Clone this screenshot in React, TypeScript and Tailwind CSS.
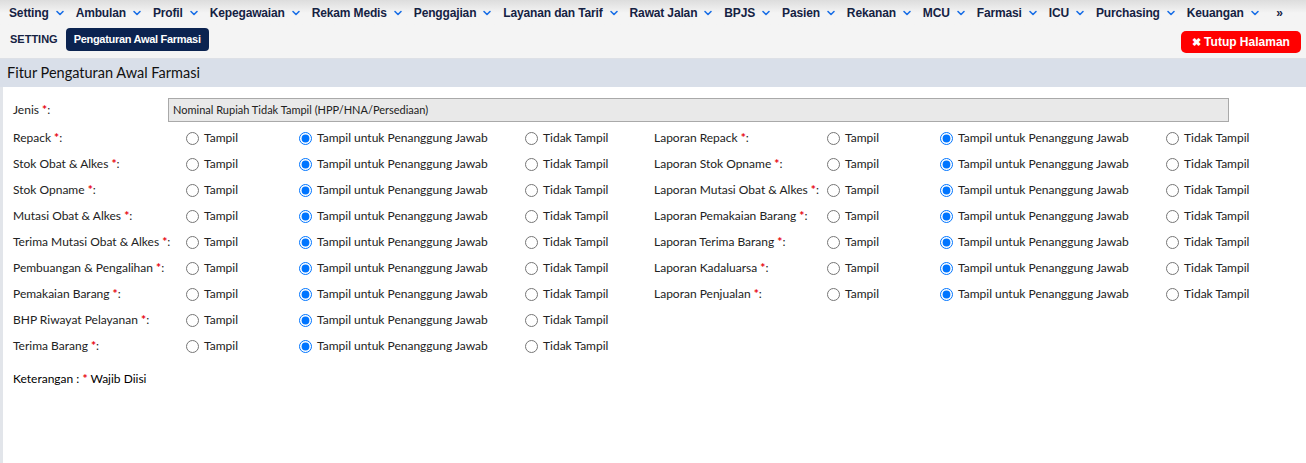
import { ChevronDown } from 'lucide-react';

const menus = [
  'Setting',
  'Ambulan',
  'Profil',
  'Kepegawaian',
  'Rekam Medis',
  'Penggajian',
  'Layanan dan Tarif',
  'Rawat Jalan',
  'BPJS',
  'Pasien',
  'Rekanan',
  'MCU',
  'Farmasi',
  'ICU',
  'Purchasing',
  'Keuangan',
];

const leftRows = [
  'Repack',
  'Stok Obat & Alkes',
  'Stok Opname',
  'Mutasi Obat & Alkes',
  'Terima Mutasi Obat & Alkes',
  'Pembuangan & Pengalihan',
  'Pemakaian Barang',
  'BHP Riwayat Pelayanan',
  'Terima Barang',
];

const rightRows = [
  'Laporan Repack',
  'Laporan Stok Opname',
  'Laporan Mutasi Obat & Alkes',
  'Laporan Pemakaian Barang',
  'Laporan Terima Barang',
  'Laporan Kadaluarsa',
  'Laporan Penjualan',
];

function Radio({ name, label, checked }: { name: string; label: string; checked?: boolean }) {
  return (
    <label className="flex items-center gap-[5px] whitespace-nowrap">
      <input
        type="radio"
        name={name}
        defaultChecked={checked}
        className="m-0 h-[13px] w-[13px] accent-[#0075ff]"
      />
      <span>{label}</span>
    </label>
  );
}

function SettingRow({ id, label }: { id: string; label: string }) {
  return (
    <div className="flex h-[26px] items-center">
      <div className="w-[173px] whitespace-nowrap">
        {label} <span className="font-bold text-red-600">*</span>:
      </div>
      <div className="w-[113px]">
        <Radio name={id} label="Tampil" />
      </div>
      <div className="w-[226px]">
        <Radio name={id} label="Tampil untuk Penanggung Jawab" checked />
      </div>
      <div className="w-[129px]">
        <Radio name={id} label="Tidak Tampil" />
      </div>
    </div>
  );
}

export default function App() {
  return (
    <div className="h-[463px] w-[1306px] overflow-hidden bg-[#f4f4f4] font-['Liberation_Sans',sans-serif] text-[#152243]">
      {/* Top menu */}
      <div className="flex h-[26px] items-center bg-gradient-to-b from-[#dddddd] via-[#f4f4f4] to-[#f4f4f4] pl-[9px] pr-[23px]">
        <div className="flex flex-1 items-center gap-[10px] whitespace-nowrap">
          {menus.map((m) => (
            <div key={m} className="flex items-center gap-[5px] text-[12px] font-bold tracking-[-0.15px]">
              {m}
              <ChevronDown className="h-[12px] w-[12px] text-[#1a6fe6]" strokeWidth={3.2} />
            </div>
          ))}
        </div>
        <span className="text-[12px] font-bold">»</span>
      </div>

      {/* Breadcrumb row */}
      <div className="flex h-[32px] items-start justify-between pl-[10px] pr-[5px] pt-[2px]">
        <div className="flex items-center gap-[8px]">
          <span className="text-[11px] font-bold">SETTING</span>
          <span className="flex h-[23px] items-center rounded-[4px] bg-[#0b2350] px-[8px] text-[11px] font-bold tracking-[-0.3px] text-white">
            Pengaturan Awal Farmasi
          </span>
        </div>
        <button className="mt-[3px] flex h-[22px] w-[120px] items-center justify-center gap-[3px] rounded-[5px] bg-[#ff0000] text-[12px] font-bold text-white">
          <span className="text-[11px]">✖</span>Tutup Halaman
        </button>
      </div>

      {/* Panel */}
      <div className="border-t border-[#dde0e6] font-['Lato',sans-serif] text-[12px] text-[#222]">
        <div className="flex h-[28px] items-center bg-[#d9dfe9] pl-[7px] text-[14.5px] text-[#111]">
          Fitur Pengaturan Awal Farmasi
        </div>
        <div className="h-[400px] border-l-[3px] border-[#e2e5ea] bg-white pl-[10px] pt-[11px]">
          <div className="flex items-center">
            <div className="w-[155px]">
              Jenis <span className="font-bold text-red-600">*</span>:
            </div>
            <div className="flex h-[24px] w-[1061px] items-center border border-[#a9a9a9] bg-[#e9e9e9] px-[4px] text-[11px]">
              Nominal Rupiah Tidak Tampil (HPP/HNA/Persediaan)
            </div>
          </div>

          <div className="mt-[3px] flex">
            <div className="flex flex-col">
              {leftRows.map((r, i) => (
                <SettingRow key={r} id={`l${i}`} label={r} />
              ))}
            </div>
            <div className="flex flex-col">
              {rightRows.map((r, i) => (
                <SettingRow key={r} id={`r${i}`} label={r} />
              ))}
            </div>
          </div>

          <div className="mt-[11px] text-black">
            Keterangan : <span className="font-bold text-red-600">*</span> Wajib Diisi
          </div>
        </div>
      </div>
    </div>
  );
}
